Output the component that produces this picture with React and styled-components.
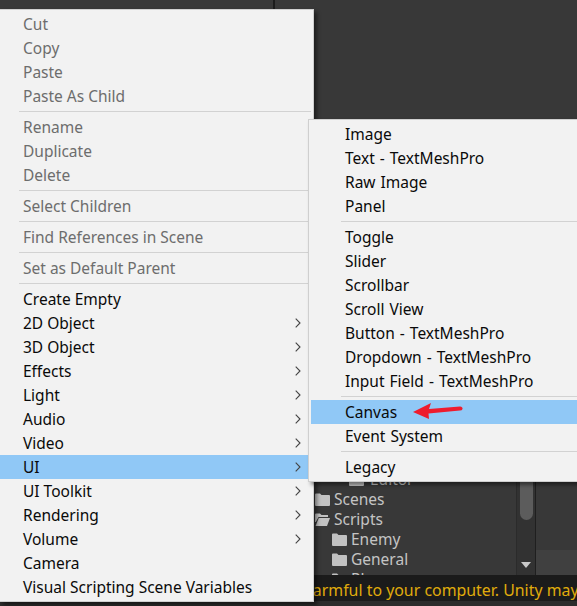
import React from 'react';
import styled, { createGlobalStyle } from 'styled-components';

const GlobalStyle = createGlobalStyle`
  html, body {
    margin: 0;
    padding: 0;
    height: 100%;
    overflow: hidden;
    background: #2c2c2c;
  }
  #root {
    height: 100%;
  }
`;

const Page = styled.div`
  position: relative;
  width: 577px;
  height: 606px;
  overflow: hidden;
  display: flex;
  flex-direction: column;
  font-family: "Noto Sans", "Open Sans", sans-serif;
`;

const Workspace = styled.div`
  flex: 1;
  min-height: 0;
  display: flex;
`;

const Hierarchy = styled.div`
  width: 273px;
  background: #383838;
  border-right: 2px solid #1c1c1c;
`;

const RightColumn = styled.div`
  flex: 1;
  min-width: 0;
  display: flex;
  flex-direction: column;
`;

const SceneView = styled.div`
  flex: 1;
  background: #383838;
`;

const ProjectPanel = styled.div`
  height: 106px;
  display: flex;
  background: #383838;
`;

const Tree = styled.div`
  width: 241px;
  overflow: hidden;
`;

const TreeRow = styled.div`
  height: 20px;
  display: flex;
  align-items: center;
  gap: ${(p) => (p.$depth === 2 ? 6 : 4)}px;
  padding-left: ${(p) => 40 + p.$depth * 17}px;
  color: #c4c4c4;
  font-size: 15.5px;
  white-space: nowrap;
`;

const ScrollTrack = styled.div`
  width: 14px;
  padding: 0 1px 0 3px;
  position: relative;
  background: #323232;
  border-left: 1px solid #2b2b2b;
  border-right: 1px solid #1f1f1f;
`;

const ScrollThumb = styled.div`
  width: 13px;
  height: 51px;
  background: #5c5c5c;
  border-radius: 0 0 7px 7px;
`;

const ScrollArrow = styled.div`
  position: absolute;
  left: 4px;
  bottom: 7px;
  width: 0;
  height: 0;
  border-left: 5px solid transparent;
  border-right: 5px solid transparent;
  border-top: 6px solid #c8c8c8;
`;

const AssetsColumn = styled.div`
  flex: 1;
  display: flex;
  flex-direction: column;
`;

const AssetsBody = styled.div`
  flex: 1;
  background: #383838;
`;

const AssetsFooter = styled.div`
  height: 25px;
  background: #404040;
`;

const StatusBar = styled.div`
  height: 26px;
  background: #1b1b1b;
  color: #e0ac0c;
  font-size: 15.9px;
  line-height: 30px;
  padding-left: 303px;
  white-space: nowrap;
  overflow: hidden;
`;

const BottomEdge = styled.div`
  height: 5px;
  background: #2c2c2c;
`;

const Menu = styled.div`
  position: absolute;
  box-sizing: border-box;
  background: #f2f2f2;
  border: 1px solid #cfcfcf;
  padding: 2px;
  box-shadow: 3px 3px 4px rgba(0, 0, 0, 0.45);
  font-size: 15.5px;
`;

const MainMenu = styled(Menu)`
  left: 0;
  top: 9px;
  width: 314px;
  border-left: none;
  padding-left: 0;
`;

const SubMenu = styled(Menu)`
  left: 308px;
  top: 119px;
  width: 300px;
  word-spacing: 1px;
`;

const Row = styled.div`
  height: 24px;
  display: flex;
  align-items: center;
  justify-content: space-between;
  padding-left: ${(p) => p.$inset}px;
  padding-right: 10px;
  color: ${(p) => (p.$disabled ? '#6d6d6d' : '#0a0a0a')};
  background: ${(p) => (p.$active ? '#90c8f6' : 'transparent')};
  white-space: nowrap;
`;

const Separator = styled.div`
  height: 1px;
  margin: 3px 0 3px ${(p) => p.$inset}px;
  background: #d2d2d2;
`;

const RedArrow = styled.svg`
  position: absolute;
  left: 410px;
  top: 400px;
  width: 56px;
  height: 22px;
`;

const Chevron = () => (
  <svg width="6" height="10" viewBox="0 0 6 10" fill="none">
    <path d="M0.7 0.7 L5 5 L0.7 9.3" stroke="#444" strokeWidth="1.1" />
  </svg>
);

const Folder = () => (
  <svg width="15" height="13" viewBox="0 0 15 13">
    <path d="M0 1.5 Q0 0.5 1 0.5 H5 L6.5 2 H14 Q15 2 15 3 V12 Q15 13 14 13 H1 Q0 13 0 12 Z" fill="#c2c2c2" />
  </svg>
);

const OpenFolder = () => (
  <svg width="15" height="13" viewBox="0 0 15 13">
    <path d="M0 1.5 Q0 0.5 1 0.5 H5 L6.5 2 H13 V4 H3.5 L0.8 9 H0 Z" fill="#c2c2c2" />
    <path d="M3.8 5 H15 L12 13 H0.5 Z" fill="#c2c2c2" />
  </svg>
);

const mainItems = [
  { label: 'Cut', disabled: true },
  { label: 'Copy', disabled: true },
  { label: 'Paste', disabled: true },
  { label: 'Paste As Child', disabled: true },
  { sep: true },
  { label: 'Rename', disabled: true },
  { label: 'Duplicate', disabled: true },
  { label: 'Delete', disabled: true },
  { sep: true },
  { label: 'Select Children', disabled: true },
  { sep: true },
  { label: 'Find References in Scene', disabled: true },
  { sep: true },
  { label: 'Set as Default Parent', disabled: true },
  { sep: true },
  { label: 'Create Empty' },
  { label: '2D Object', sub: true },
  { label: '3D Object', sub: true },
  { label: 'Effects', sub: true },
  { label: 'Light', sub: true },
  { label: 'Audio', sub: true },
  { label: 'Video', sub: true },
  { label: 'UI', sub: true, active: true },
  { label: 'UI Toolkit', sub: true },
  { label: 'Rendering', sub: true },
  { label: 'Volume', sub: true },
  { label: 'Camera' },
  { label: 'Visual Scripting Scene Variables' },
];

const subItems = [
  { label: 'Image' },
  { label: 'Text - TextMeshPro' },
  { label: 'Raw Image' },
  { label: 'Panel' },
  { sep: true },
  { label: 'Toggle' },
  { label: 'Slider' },
  { label: 'Scrollbar' },
  { label: 'Scroll View' },
  { label: 'Button - TextMeshPro' },
  { label: 'Dropdown - TextMeshPro' },
  { label: 'Input Field - TextMeshPro' },
  { sep: true },
  { label: 'Canvas', active: true },
  { label: 'Event System' },
  { sep: true },
  { label: 'Legacy' },
];

const treeItems = [
  { label: 'Editor', depth: 2 },
  { label: 'Scenes', depth: 0 },
  { label: 'Scripts', depth: 0, open: true },
  { label: 'Enemy', depth: 1 },
  { label: 'General', depth: 1 },
  { label: 'Player', depth: 1 },
];

const renderItems = (items, inset, sepInset) =>
  items.map((item, i) =>
    item.sep ? (
      <Separator key={i} $inset={sepInset} />
    ) : (
      <Row key={item.label} $inset={inset} $disabled={item.disabled} $active={item.active}>
        {item.label}
        {item.sub && <Chevron />}
      </Row>
    )
  );

const App = () => (
  <>
    <GlobalStyle />
    <Page>
      <Workspace>
        <Hierarchy />
        <RightColumn>
          <SceneView />
          <ProjectPanel>
            <Tree>
              {treeItems.map((item) => (
                <TreeRow key={item.label} $depth={item.depth}>
                  {item.open ? <OpenFolder /> : <Folder />}
                  {item.label}
                </TreeRow>
              ))}
            </Tree>
            <ScrollTrack>
              <ScrollThumb />
              <ScrollArrow />
            </ScrollTrack>
            <AssetsColumn>
              <AssetsBody />
              <AssetsFooter />
            </AssetsColumn>
          </ProjectPanel>
        </RightColumn>
      </Workspace>
      <StatusBar>harmful to your computer. Unity may open</StatusBar>
      <BottomEdge />

      <MainMenu>{renderItems(mainItems, 23, 19)}</MainMenu>
      <SubMenu>{renderItems(subItems, 34, 30)}</SubMenu>

      <RedArrow viewBox="0 0 56 22">
        <path
          d="M3 12 L21 3 L19 9 L50 6.5 Q53 7 52.5 9 Q52 10.5 50 10.5 L18.5 13.5 L19 19 Z"
          fill="#ee1c2e"
        />
      </RedArrow>
    </Page>
  </>
);

export default App;
